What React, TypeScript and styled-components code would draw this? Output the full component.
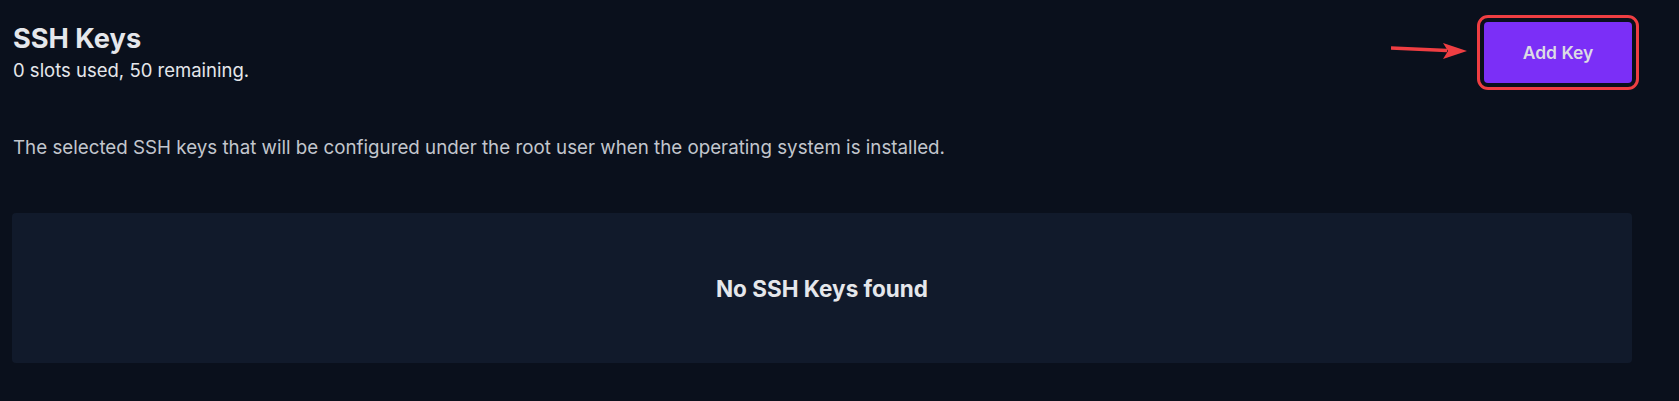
import React from 'react';
import styled, { createGlobalStyle } from 'styled-components';

const GlobalStyle = createGlobalStyle`
    html, body {
        margin: 0;
        padding: 0;
        background: #0a101c;
    }
    body {
        font-family: Inter, 'Noto Sans', sans-serif;
        color: #e5e7eb;
    }
`;

const Page = styled.div`
    padding: 21px 47px 0 12px;
    min-height: 401px;
    box-sizing: border-box;
`;

const Header = styled.div`
    display: flex;
    justify-content: space-between;
    align-items: flex-start;
`;

const TitleBlock = styled.div`
    display: flex;
    flex-direction: column;
    padding-left: 1px;
`;

const Title = styled.h2`
    margin: 2px 0 0;
    font-size: 27.2px;
    line-height: 32px;
    font-weight: 700;
    color: #e5e7eb;
`;

const Usage = styled.div`
    margin-top: 2px;
    font-size: 18.5px;
    line-height: 26px;
    color: #e5e7eb;
`;

const ButtonArea = styled.div`
    position: relative;
    margin-top: 1px;
`;

const AddButton = styled.button`
    width: 148px;
    height: 61px;
    border: none;
    border-radius: 4px;
    background: #7b2ff7;
    color: #dcdce4;
    font-family: Inter, 'Noto Sans', sans-serif;
    font-size: 17.5px;
    font-weight: 600;
    cursor: pointer;
    outline: 3px solid #ef3e42;
    outline-offset: 4px;
`;

const Arrow = styled.svg`
    position: absolute;
    left: -93px;
    top: 20px;
`;

const Description = styled.p`
    margin: 51px 0 0 1px;
    font-size: 18.75px;
    line-height: 28px;
    color: #c2c6cd;
`;

const EmptyPanel = styled.div`
    margin-top: 51px;
    height: 150px;
    border-radius: 4px;
    background: #111a2b;
    display: flex;
    align-items: center;
    justify-content: center;
`;

const EmptyText = styled.div`
    font-size: 22.5px;
    font-weight: 700;
    color: #e5e7eb;
`;

export default function App() {
    return (
        <>
            <GlobalStyle />
            <Page>
                <Header>
                    <TitleBlock>
                        <Title>SSH Keys</Title>
                        <Usage>0 slots used, 50 remaining.</Usage>
                    </TitleBlock>
                    <ButtonArea>
                        <Arrow width='80' height='20' viewBox='0 0 80 20'>
                            <path d='M0 6 L56 8.5' stroke='#ef3e42' strokeWidth='3.5' fill='none' />
                            <polygon points='52,1 76,9 52,17 57,9' fill='#ef3e42' />
                        </Arrow>
                        <AddButton>Add Key</AddButton>
                    </ButtonArea>
                </Header>
                <Description>
                    The selected SSH keys that will be configured under the root user when the operating system is installed.
                </Description>
                <EmptyPanel>
                    <EmptyText>No SSH Keys found</EmptyText>
                </EmptyPanel>
            </Page>
        </>
    );
}
